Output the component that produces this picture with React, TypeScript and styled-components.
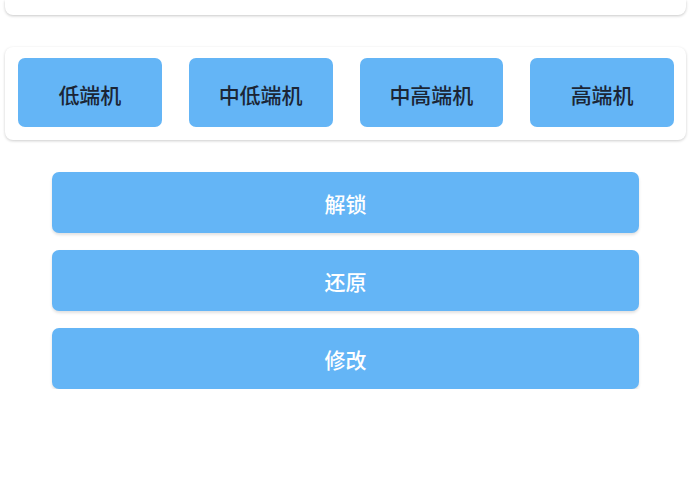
import React from "react";
import styled, { createGlobalStyle } from "styled-components";

const Global = createGlobalStyle`
  html, body { margin: 0; padding: 0; background: #ffffff; }
  body { font-family: "Noto Sans CJK SC", "Noto Sans", sans-serif; }
`;

const Page = styled.div`
  width: 691px;
  display: flex;
  flex-direction: column;
`;

const TopCard = styled.div`
  height: 15px;
  margin: 0 5px;
  background: #ffffff;
  border-radius: 0 0 8px 8px;
  box-shadow: 0 1px 3px rgba(0, 0, 0, 0.22);
`;

const Card = styled.div`
  margin: 32px 5px 0;
  padding: 11px 12px 13px 13px;
  background: #ffffff;
  border-radius: 8px;
  box-shadow: 0 1px 3px rgba(0, 0, 0, 0.2);
  display: grid;
  grid-template-columns: repeat(4, 1fr);
  column-gap: 27px;
`;

const TierButton = styled.div`
  height: 69px;
  background: #64b5f6;
  border-radius: 7px;
  display: flex;
  align-items: center;
  justify-content: center;
  color: #1b2535;
  font-size: 21px;
  font-weight: 500;
  padding-top: 3px;
  box-sizing: border-box;
`;

const Actions = styled.div`
  margin: 32px 52px 0;
  display: flex;
  flex-direction: column;
  gap: 17px;
`;

const ActionButton = styled.div`
  height: 61px;
  background: #64b5f6;
  border-radius: 7px;
  box-shadow: 0 2px 3px rgba(0, 0, 0, 0.12);
  display: flex;
  align-items: center;
  justify-content: center;
  color: #ffffff;
  font-size: 21px;
  font-weight: 500;
`;

export default function App() {
  const tiers = ["低端机", "中低端机", "中高端机", "高端机"];
  const actions = ["解锁", "还原", "修改"];
  return (
    <>
      <Global />
      <Page>
        <TopCard />
        <Card>
          {tiers.map((t) => (
            <TierButton key={t}>{t}</TierButton>
          ))}
        </Card>
        <Actions>
          {actions.map((a) => (
            <ActionButton key={a}>{a}</ActionButton>
          ))}
        </Actions>
      </Page>
    </>
  );
}
